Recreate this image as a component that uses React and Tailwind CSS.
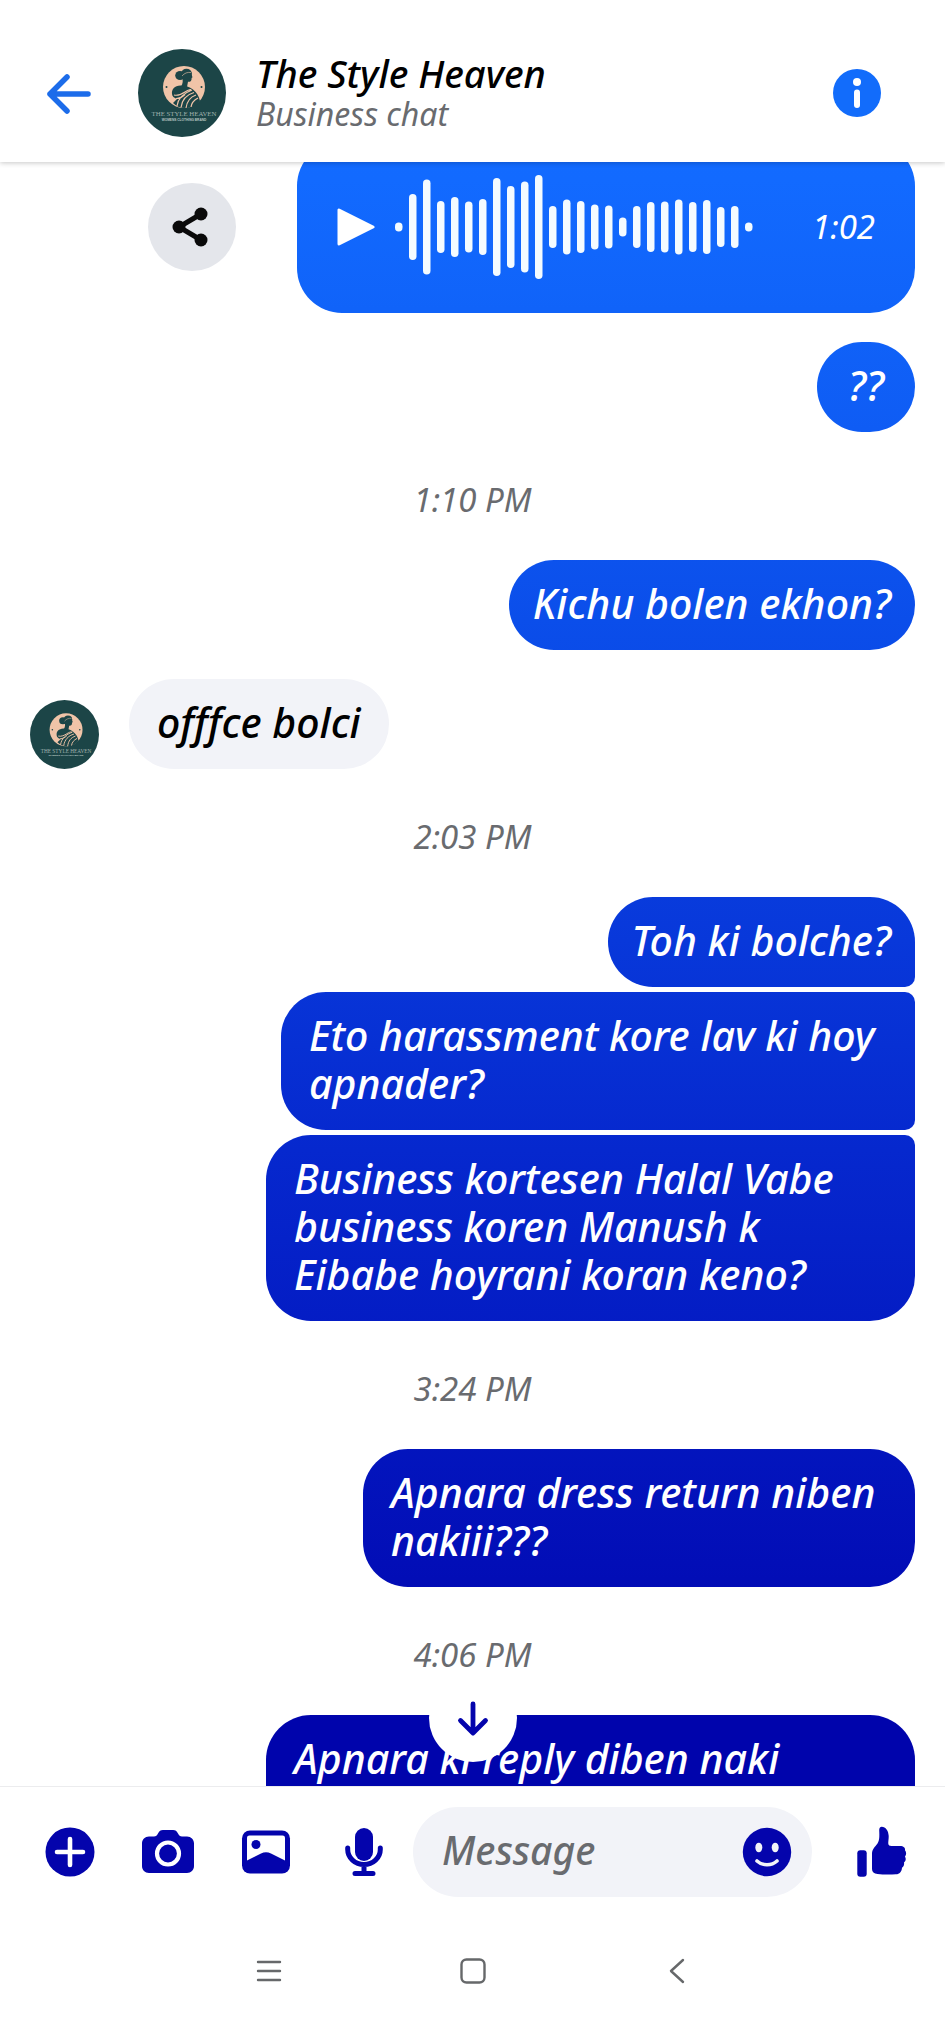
const INK = "#0404ac";

const waveform = [
  9, 66, 95, 52, 60, 51, 56, 98, 82, 91, 104, 42, 55, 52, 45, 43, 19, 42, 50,
  51, 55, 50, 54, 40, 42, 9,
];

function Avatar({ className }) {
  return (
    <svg viewBox="0 0 88 88" className={`not-italic ${className}`} role="img" aria-label="The Style Heaven">
      <circle cx="44" cy="44" r="44" fill="#1c4547" />
      <circle cx="46" cy="38" r="21" fill="#f0c4a8" />
      <circle cx="28.500" cy="38" r="1" fill="#1c4547" />
      <circle cx="63.500" cy="38" r="1" fill="#1c4547" />
      <ellipse cx="42" cy="26.500" rx="4.800" ry="4.500" fill="#1c4547" />
      <ellipse cx="48.500" cy="24.500" rx="5.200" ry="4.800" fill="#1c4547" />
      <path d="M44 23h9.300c.6 2 .4 3.500 1.200 5.200l-.9.700c.1 2.600-.8 4-3.600 3.900L49 38l-6-.5c2-3 2.200-6 1-9z" fill="#1c4547" />
      <path d="M44 27c2.500-3 5.500-4 9-3.500" stroke="#f0c4a8" strokeWidth=".6" fill="none" />
      <path d="M34 45c-.5-5 2.500-8 8.500-8.500 5 0 9 1.500 12.500 4 4 3 6 7 7 11.500-3 4.500-8 7-15 7-5 0-9-2-12-5l4-4c-3-1-5-3-5-5z" fill="#1c4547" />
      <path
        d="M39 57c1-8 7-13 15-16M43 58.500c1-8 6-13 13-15M48 59c1-7 4-11 10-13M53 58c.5-4 3-7 7-9M36 46c4 1 8-1 11-3s4-2 6-2.500M38 49.500c4 0 7-2 9-4"
        stroke="#f0c4a8"
        strokeWidth="1.200"
        fill="none"
      />
      <text x="46" y="67" textAnchor="middle" fontSize="6.800" fontFamily="Liberation Serif, serif" fill="#9fb0ac">
        THE STYLE HEAVEN
      </text>
      <text x="46" y="72" textAnchor="middle" fontSize="3.200" fontWeight="700" fontFamily="Liberation Sans, sans-serif" fill="#b9c6c3">
        WOMENS CLOTHING BRAND
      </text>
    </svg>
  );
}

function Time({ children }) {
  return (
    <time className="block pt-11 pb-9 text-center text-[33px] leading-[48px] text-[#696b6f]">
      {children}
    </time>
  );
}

function Bubble({ className, children }) {
  return (
    <p
      className={`self-end whitespace-pre bg-[linear-gradient(180deg,#146eff_0px,#126aff_180px,#1063f9_310px,#0f5cf4_430px,#0b4eea_620px,#0838da_940px,#0628ce_1150px,#041cc4_1330px,#020db6_1580px,#0004ac_1720px)] bg-fixed pt-[19px] pb-[23px] text-[41px] font-medium leading-[48px] text-white ${className}`}
    >
      {children}
    </p>
  );
}

function Header() {
  return (
    <header className="relative z-10 flex h-[162px] shrink-0 items-center bg-white pt-6 pr-16 pl-11 shadow-[0_1px_5px_rgba(0,0,0,0.22)]">
      <button type="button" aria-label="Back" className="mr-11">
        <svg viewBox="0 0 50 50" className="size-[50px]" fill="none" stroke="#1c6cea" strokeWidth="5.500" strokeLinecap="round" strokeLinejoin="round">
          <path d="M44 26H6M23 9 6 26l17 17" />
        </svg>
      </button>
      <Avatar className="size-[88px] shrink-0" />
      <div className="ml-[30px] flex-1">
        <h1 className="text-[38px] font-medium leading-[42px] text-black">The Style Heaven</h1>
        <p className="text-[32px] leading-[40px] text-[#696b6f]">Business chat</p>
      </div>
      <button type="button" aria-label="Conversation details">
        <svg viewBox="0 0 48 48" className="size-12">
          <circle cx="24" cy="24" r="24" fill="#126cfb" />
          <circle cx="24" cy="13" r="4" fill="#fff" />
          <rect x="21" y="20.500" width="6" height="18.500" rx="3" fill="#fff" />
        </svg>
      </button>
    </header>
  );
}

function VoiceMessage() {
  return (
    <div className="-mt-[21px] flex items-center justify-end gap-[61px]">
      <button type="button" aria-label="Share" className="size-[88px] rounded-full bg-[#e4e6eb]">
        <svg viewBox="0 0 88 88" className="size-[88px]" fill="#0a0a0a" stroke="#0a0a0a">
          <path d="M53 31 31 44l22 13" fill="none" strokeWidth="5" />
          <circle cx="31" cy="44" r="6.500" stroke="none" />
          <circle cx="53" cy="31" r="6.500" stroke="none" />
          <circle cx="53" cy="57" r="6.500" stroke="none" />
        </svg>
      </button>
      <div className="flex h-[172px] w-[618px] items-center rounded-[45px] bg-[linear-gradient(180deg,#146eff_0px,#126aff_180px,#1063f9_310px)] bg-fixed pr-10 pl-10 text-white">
        <button type="button" aria-label="Play voice message">
          <svg viewBox="0 0 38 38" className="size-[38px]" fill="#fff" stroke="#fff" strokeWidth="3" strokeLinejoin="round">
            <path d="M2 2v34l34-17z" />
          </svg>
        </button>
        <svg viewBox="0 0 358 106" className="ml-5 h-[106px] w-[358px]" fill="#f4fbff" aria-hidden="true">
          {waveform.map((h, i) => (
            <rect key={i} x={i * 14} y={53 - h / 2} width="7.500" height={h} rx="3.750" />
          ))}
        </svg>
        <span className="ml-auto text-[33px] leading-[40px]">1:02</span>
      </div>
    </div>
  );
}

function Composer() {
  return (
    <form className="flex items-center pt-5 pr-[38px] pl-11" onSubmit={(e) => e.preventDefault()}>
      <div className="flex gap-[46px]">
        <button type="button" aria-label="More actions">
          <svg viewBox="0 0 52 52" className="size-[52px]">
            <circle cx="26" cy="26" r="24.500" fill={INK} />
            <path d="M26 13v26M13 26h26" stroke="#fff" strokeWidth="4.600" strokeLinecap="round" />
          </svg>
        </button>
        <button type="button" aria-label="Camera">
          <svg viewBox="0 0 52 52" className="size-[52px]">
            <path
              d="M7 10.500h5c2 0 3-1 4-3 1.200-2.500 2.500-3.500 5-3.500h10c2.500 0 3.800 1 5 3.500 1 2 2 3 4 3h5c4 0 7 3 7 7V40c0 4-3 7-7 7H7c-4 0-7-3-7-7V17.500c0-4 3-7 7-7z"
              fill={INK}
            />
            <circle cx="26" cy="27.500" r="11" fill={INK} stroke="#fff" strokeWidth="4.200" />
          </svg>
        </button>
        <button type="button" aria-label="Gallery">
          <svg viewBox="0 0 52 52" className="size-[52px]">
            <rect x="2" y="4.500" width="48" height="43" rx="8" fill={INK} />
            <path d="M7 12c0-1.700 1-2.500 2.500-2.500h33c1.500 0 2.500.8 2.500 2.500v22.500l-14-7c-3.300-1.700-6.700-1.700-10 0l-14 7z" fill="#fff" />
            <circle cx="16" cy="18.500" r="4.500" fill={INK} />
          </svg>
        </button>
        <button type="button" aria-label="Voice clip">
          <svg viewBox="0 0 52 52" className="size-[52px]" fill="none" stroke={INK} strokeWidth="5" strokeLinecap="round">
            <rect x="17" y="2" width="18" height="33" rx="9" fill={INK} stroke="none" />
            <path d="M9.700 22v1.500a16.300 15 0 0 0 32.600 0V22M26 39v8M17 47.500h18" />
          </svg>
        </button>
      </div>
      <div className="ml-[23px] flex h-[90px] min-w-0 flex-1 items-center rounded-full bg-[#f2f3f8] pr-[19px] pl-[29px]">
        <input
          type="text"
          aria-label="Message"
          placeholder="Message"
          className="min-w-0 flex-1 bg-transparent pb-1 text-[39px] font-medium italic leading-[48px] text-black outline-none placeholder:text-[#696b6f]"
        />
        <button type="button" aria-label="Emoji">
          <svg viewBox="0 0 52 52" className="size-[52px]">
            <circle cx="26" cy="26" r="24.200" fill={INK} />
            <ellipse cx="17.800" cy="21.500" rx="3.500" ry="4.800" fill="#f2f3f8" />
            <ellipse cx="34.200" cy="21.500" rx="3.500" ry="4.800" fill="#f2f3f8" />
            <path d="M16 35c5.500 5 14.500 5 20 0" fill="none" stroke="#f2f3f8" strokeWidth="3.600" strokeLinecap="round" />
          </svg>
        </button>
      </div>
      <button type="button" aria-label="Send a like" className="ml-[43px]">
        <svg viewBox="15 25 52 52" className="size-[52px]" fill={INK}>
          <rect x="17.300" y="49.300" width="9.400" height="26.500" rx="3" />
          <path d="M32 53c0-5 3-7 5.500-10.500C39.500 39 39.500 36 39.200 29c0-2 .8-3.300 2.500-3.300 4 0 6.800 4 7 9.300.1 3-.6 6-.4 7.800.2 1.500 1.200 2.200 3 2.200H60c3.500 0 5.500 1.800 5 4.300 1.500 2 1.500 4.500 0 6.200 1.300 2.500.8 4.500-1 6 .5 2.300-.3 4-2 5.200-.3 4-2.500 6.500-6 6.500-6.500.3-13 .3-18.500-.3-3.500-.4-5.500-2-5.500-5z" />
        </svg>
      </button>
    </form>
  );
}

function SystemNav() {
  return (
    <nav aria-label="System" className="flex h-[136px] items-center justify-center gap-[176px] pt-3">
      <button type="button" aria-label="Recent apps">
        <svg viewBox="0 0 28 28" className="size-7" stroke="#66686a" strokeWidth="2.400" strokeLinecap="round">
          <path d="M3 5h22M3 14h22M3 23h22" />
        </svg>
      </button>
      <button type="button" aria-label="Home">
        <svg viewBox="0 0 28 28" className="size-7" fill="none" stroke="#66686a" strokeWidth="2.400">
          <rect x="2.500" y="2.500" width="23" height="23" rx="5" />
        </svg>
      </button>
      <button type="button" aria-label="Go back">
        <svg viewBox="0 0 28 28" className="size-7" fill="none" stroke="#66686a" strokeWidth="2.400" strokeLinecap="round" strokeLinejoin="round">
          <path d="M20 3 8 14l12 11" />
        </svg>
      </button>
    </nav>
  );
}

export default function App() {
  return (
    <div className="flex h-screen flex-col bg-white font-['Noto_Sans',sans-serif] italic [font-variant-ligatures:none]">
      <Header />
      <main className="relative min-h-0 flex-1 overflow-hidden">
        <div className="flex flex-col px-[30px]">
          <VoiceMessage />
          <Bubble className="mt-[29px] w-[98px] rounded-[45px] text-center">??</Bubble>
          <Time>1:10 PM</Time>
          <Bubble className="rounded-[45px] px-6">Kichu bolen ekhon?</Bubble>
          <div className="mt-[29px] flex items-end gap-[30px]">
            <Avatar className="size-[69px] shrink-0" />
            <p className="rounded-[45px] bg-[#f2f3f8] px-7 pt-[19px] pb-[23px] text-[41px] font-medium leading-[48px] text-black">
              offfce bolci
            </p>
          </div>
          <Time>2:03 PM</Time>
          <div className="flex flex-col gap-[5px]">
            <Bubble className="rounded-[45px] rounded-br-[10px] px-6">Toh ki bolche?</Bubble>
            <Bubble className="w-[634px] rounded-[45px] rounded-r-[10px] px-7">
              {"Eto harassment kore lav ki hoy\napnader?"}
            </Bubble>
            <Bubble className="w-[649px] rounded-[45px] rounded-tr-[10px] px-7">
              {"Business kortesen Halal Vabe\nbusiness koren Manush k\nEibabe hoyrani koran keno?"}
            </Bubble>
          </div>
          <Time>3:24 PM</Time>
          <Bubble className="w-[552px] rounded-[45px] px-7">{"Apnara dress return niben\nnakiii???"}</Bubble>
          <Time>4:06 PM</Time>
          <Bubble className="w-[649px] rounded-t-[45px] px-7">Apnara ki reply diben naki</Bubble>
        </div>
        <button
          type="button"
          aria-label="Jump to latest message"
          className="absolute bottom-6 left-1/2 -translate-x-1/2 rounded-full bg-white"
        >
          <svg viewBox="0 0 88 88" className="size-[88px]" fill="none" stroke={INK} strokeWidth="4.800" strokeLinecap="round" strokeLinejoin="round">
            <path d="M44 30v29M31.500 46.500 44 59l12.500-12.500" />
          </svg>
        </button>
      </main>
      <footer className="relative shrink-0 border-t border-[#ececee] bg-white">
        <Composer />
        <SystemNav />
      </footer>
    </div>
  );
}
